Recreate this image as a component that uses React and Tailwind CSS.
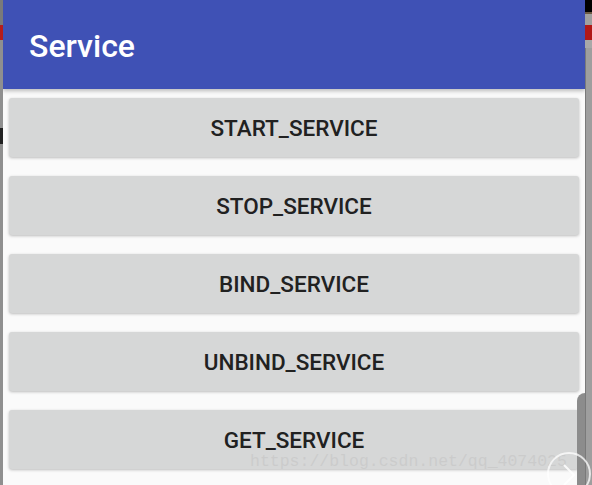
import React from 'react';

const actions = ['START_SERVICE', 'STOP_SERVICE', 'BIND_SERVICE', 'UNBIND_SERVICE', 'GET_SERVICE'];

function ActionButton({ label }) {
  return (
    <button className="h-[59px] w-full shrink-0 rounded-[3px] bg-[#d6d7d7] pt-[3px] text-[22.5px] font-medium text-[#212121] shadow-[0_1px_3px_rgba(0,0,0,0.25)]">
      {label}
    </button>
  );
}

export default function App() {
  return (
    <div className="relative flex h-[485px] w-[592px] overflow-hidden bg-[#9a9a9a]" style={{ fontFamily: 'Roboto, "Noto Sans", sans-serif' }}>
      {/* left edge of the screen behind */}
      <div className="flex w-[3px] shrink-0 flex-col bg-[#8f8f8f]">
        <div className="h-[25px] bg-[#7a7a7a]" />
        <div className="h-[15px] bg-[#b51c1c]" />
        <div className="h-[88px]" />
        <div className="h-[16px] bg-[#222]" />
      </div>

      <div className="relative flex w-[582px] shrink-0 flex-col overflow-hidden bg-[#fafafa]">
        <header className="flex h-[89px] shrink-0 items-center bg-[#3f51b5] pl-[26px] pt-[2px] shadow-[0_2px_4px_rgba(0,0,0,0.25)]">
          <h1 className="text-[32px] font-medium text-white">Service</h1>
        </header>
        <div className="flex flex-col gap-[19px] px-[6px] pt-[9px]">
          {actions.map((a) => (
            <ActionButton key={a} label={a} />
          ))}
        </div>

        {/* watermark */}
        <span className="pointer-events-none absolute left-[247px] top-[450px] whitespace-nowrap text-[16.5px] text-[#c8c8c8]/75" style={{ fontFamily: '"Liberation Mono", monospace' }}>
          https://blog.csdn.net/qq_4074025
        </span>
        <div className="absolute right-0 top-[393px] h-[100px] w-[8px] rounded-tl-[8px] bg-[#8c8c8c]" />
      </div>

      {/* right edge of the screen behind */}
      <div className="flex w-[7px] shrink-0 flex-col bg-[#9c9c9c]">
        <div className="h-[12px] bg-black" />
        <div className="h-[2px] bg-[#6b5a45]" />
        <div className="h-[11px] bg-[#a0a0a0]" />
        <div className="h-[15px] bg-[#b01818]" />
        <div className="h-[8px] bg-[#a8a8a8]" />
        <div className="flex-1 border-l border-[#7a7a7a] bg-[#9e9e9e]" />
      </div>

      {/* floating round button at the corner */}
      <svg className="pointer-events-none absolute left-[546px] top-[451px]" width="46" height="46" viewBox="0 0 46 46">
        <circle cx="23" cy="23" r="21" fill="none" stroke="rgba(255,255,255,0.75)" strokeWidth="2" />
        <path d="M18 14 L28 24 L18 34" fill="none" stroke="rgba(255,255,255,0.85)" strokeWidth="2" />
      </svg>
    </div>
  );
}
